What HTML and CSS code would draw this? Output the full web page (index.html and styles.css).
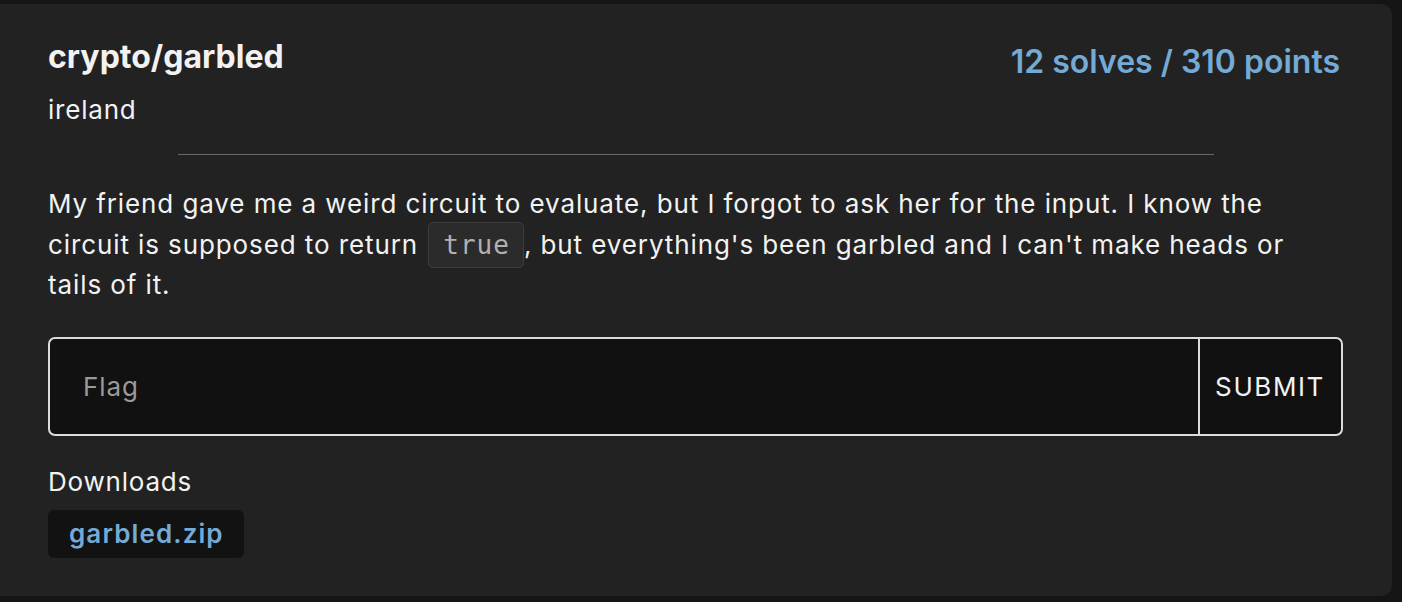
FILE: index.html
```html
<!DOCTYPE html>
<html>
<head>
<meta charset="utf-8">
<link rel="stylesheet" href="styles.css">
</head>
<body>
<div class="card">
  <div class="head">
    <div class="titles">
      <div class="title">crypto/garbled</div>
      <div class="author">ireland</div>
    </div>
    <div class="stats">12 solves / 310 points</div>
  </div>
  <hr class="divider">
  <p class="desc">My friend gave me a weird circuit to evaluate, but I forgot to ask her for the input. I know the circuit is supposed to return <code>true</code>, but everything's been garbled and I can't make heads or tails of it.</p>
  <form class="flag-form">
    <input class="flag-input" type="text" placeholder="Flag">
    <button class="submit" type="button">SUBMIT</button>
  </form>
  <div class="downloads-label">Downloads</div>
  <div class="downloads">
    <a class="file" href="#">garbled.zip</a>
  </div>
</div>
</body>
</html>
```

FILE: styles.css
```css
html, body {
  margin: 0;
  padding: 0;
  background: #151515;
  font-family: Inter, "Noto Sans", sans-serif;
  color: #f2f2f2;
}
.card {
  margin-top: 4px;
  width: 1392px;
  height: 592px;
  box-sizing: border-box;
  background: #222222;
  border-radius: 0 10px 10px 0;
  padding: 35px 49px 0 48px;
}
.head {
  display: flex;
  justify-content: space-between;
  align-items: flex-start;
}
.title {
  font-size: 32px;
  font-weight: 700;
  line-height: 36px;
}
.author {
  font-size: 26px;
  letter-spacing: 0.8px;
  line-height: 32px;
  margin-top: 19px;
}
.stats {
  font-size: 32px;
  font-weight: 600;
  color: #74aad6;
  line-height: 36px;
  margin-top: 5px;
  margin-right: 3px;
}
.divider {
  width: 80%;
  border: 0;
  border-top: 1px solid #6a6a6a;
  margin: 28px auto 29px;
}
.desc {
  margin: 0;
  font-size: 26px;
  letter-spacing: 0.9px;
  line-height: 40.5px;
}
.desc code {
  font-family: "DejaVu Sans Mono", monospace;
  font-size: 26px;
  letter-spacing: 1px;
  color: #b0b0b0;
  background: #2b2b2b;
  border: 1px solid #3c3c3c;
  border-radius: 5px;
  padding: 7px 13px 7px 14px;
  margin-left: 2px;
}
.flag-form {
  display: flex;
  margin-top: 31px;
  height: 99px;
  border: 2px solid #dcdcdc;
  border-radius: 7px;
  box-sizing: border-box;
  background: #111111;
  overflow: hidden;
}
.flag-input {
  flex: 1;
  background: transparent;
  border: 0;
  outline: none;
  font-family: inherit;
  font-size: 26px;
  letter-spacing: 0.9px;
  color: #f2f2f2;
  padding: 0 33px;
}
.flag-input::placeholder {
  color: #9a9a9a;
}
.submit {
  background: transparent;
  border: 0;
  border-left: 2px solid #dcdcdc;
  color: #f2f2f2;
  font-family: inherit;
  font-size: 26px;
  letter-spacing: 1.6px;
  padding: 0 16px 0 15px;
}
.downloads-label {
  font-size: 26px;
  letter-spacing: 0.8px;
  line-height: 32px;
  margin-top: 30px;
}
.downloads {
  display: flex;
  margin-top: 12px;
}
.file {
  display: block;
  background: #121212;
  border-radius: 6px;
  color: #74aad6;
  font-size: 26px;
  font-weight: 600;
  letter-spacing: 1.1px;
  text-decoration: none;
  line-height: 48px;
  padding: 0 20px 0 21px;
}
```
